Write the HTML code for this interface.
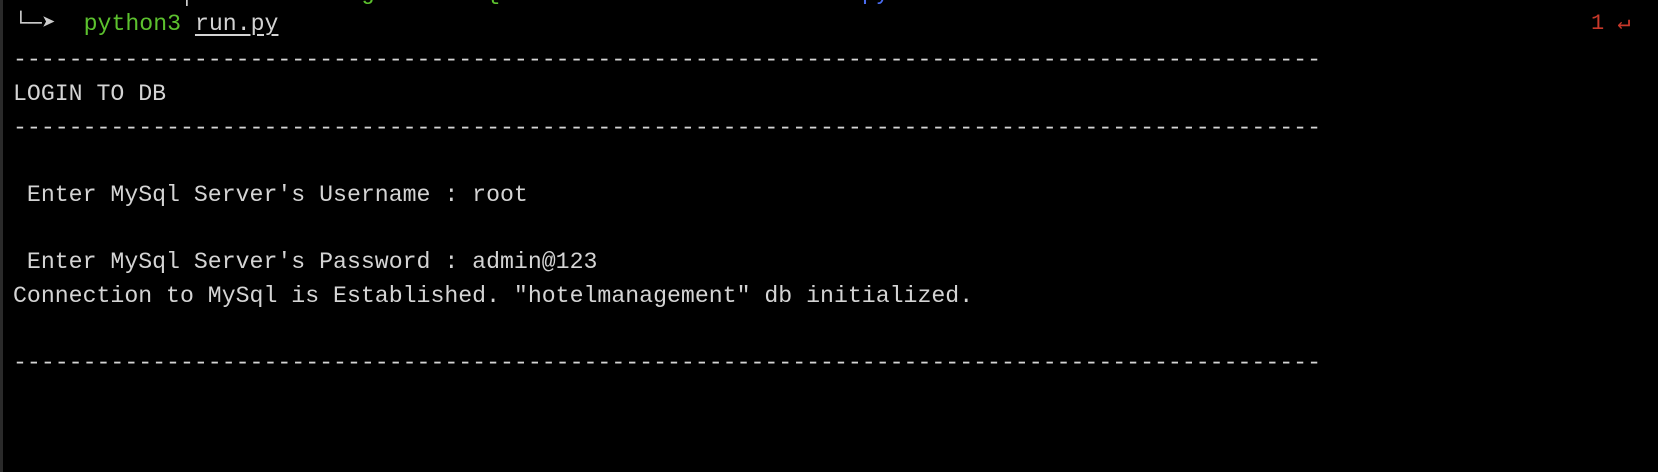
<!DOCTYPE html>
<html><head><meta charset="utf-8"><style>
html,body{margin:0;padding:0;background:#000;width:1658px;height:472px;overflow:hidden}
body{position:relative;font-family:"Liberation Mono","DejaVu Sans Mono",monospace;font-size:23.2px;color:#d4d4d4}
.l{position:absolute;left:13px;height:34px;line-height:34px;white-space:pre}
.bar{position:absolute;left:0;top:0;width:3px;height:472px;background:#2a2a2a}
.g{color:#5cc12e}.u{text-decoration:underline;text-underline-offset:4px}
.r{color:#c8382a}.b{color:#4a6cf0}
</style></head><body>
<div class="bar"></div>
<div class="l" style="top:-24px">└─┘       ┘ │    <span class="g">        g        {</span>                         <span class="b"> py</span></div>
<div class="l" style="top:7px;left:14px"><span style="color:#ccc">└─➤</span>  <span class="g">python3</span> <span class="u">run.py</span></div>
<div class="l r" style="top:7px;left:1591px;font-size:22px">1 ↵</div>
<div class="l" style="top:43px">----------------------------------------------------------------------------------------------</div>
<div class="l" style="top:77px">LOGIN TO DB</div>
<div class="l" style="top:111px">----------------------------------------------------------------------------------------------</div>
<div class="l" style="top:178px"> Enter MySql Server's Username : root</div>
<div class="l" style="top:245px"> Enter MySql Server's Password : admin@123</div>
<div class="l" style="top:279px">Connection to MySql is Established. "hotelmanagement" db initialized.</div>
<div class="l" style="top:346px">----------------------------------------------------------------------------------------------</div>
</body></html>
